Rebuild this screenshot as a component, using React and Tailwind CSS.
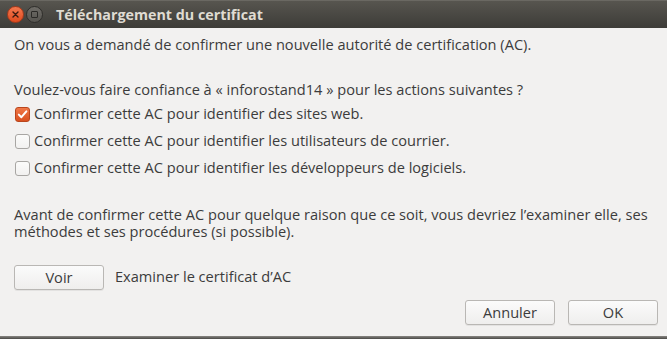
import React from "react";

function Check({ checked }) {
  if (checked) {
    return (
      <span className="flex h-[15px] w-[15px] shrink-0 items-center justify-center rounded-[3px] border border-[#b9461d] bg-gradient-to-b from-[#f07746] to-[#d9501f]">
        <svg width="11" height="11" viewBox="0 0 11 11">
          <path d="M1.8 5.6 L4.4 8.2 L9.4 2.4" fill="none" stroke="#fff" strokeWidth="2" strokeLinecap="round" strokeLinejoin="round" />
        </svg>
      </span>
    );
  }
  return <span className="h-[15px] w-[15px] shrink-0 rounded-[3px] border border-[#a8a6a3] bg-gradient-to-b from-[#fbfbfa] to-[#f2f1f0]" />;
}

function Btn({ children, className = "" }) {
  return (
    <button className={`flex h-[25px] items-center justify-center rounded-[3px] border border-[#b9b7b4] bg-gradient-to-b from-[#fbfbfb] to-[#efeeed] text-[#3c3c3c] shadow-[0_1px_0_rgba(0,0,0,0.06)] ${className}`}>
      {children}
    </button>
  );
}

export default function App() {
  const rows = [
    ["Confirmer cette AC pour identifier des sites web.", true],
    ["Confirmer cette AC pour identifier les utilisateurs de courrier.", false],
    ["Confirmer cette AC pour identifier les développeurs de logiciels.", false],
  ];
  return (
    <div className="flex h-[339px] w-[667px] flex-col bg-[#f2f1f0] font-['Open_Sans',sans-serif] text-[14.6px] text-[#3c3c3c]">
      {/* Title bar */}
      <div className="flex h-[28px] shrink-0 items-center bg-gradient-to-b from-[#57554f] to-[#3d3c38] border-t border-[#6a6862]">
        <span className="ml-[7px] flex h-[17px] w-[17px] items-center justify-center rounded-full border border-[#a8391a] bg-gradient-to-b from-[#f4774d] to-[#df4a1c]">
          <svg width="7" height="7" viewBox="0 0 7 7">
            <path d="M1 1 L6 6 M6 1 L1 6" stroke="#3a1a10" strokeWidth="1.4" strokeLinecap="round" />
          </svg>
        </span>
        <span className="ml-[2px] flex h-[17px] w-[17px] items-center justify-center rounded-full border border-[#2f2e2b] bg-gradient-to-b from-[#6e6c67] to-[#56544f]">
          <span className="h-[7px] w-[7px] rounded-[1px] border border-[#2b2a27]" />
        </span>
        <span className="ml-[13px] text-[14.3px] font-bold text-[#dfdbd2]">Téléchargement du certificat</span>
      </div>

      {/* Content */}
      <div className="flex flex-1 flex-col px-[14px]">
        <p className="mt-[7px] leading-[18px]">On vous a demandé de confirmer une nouvelle autorité de certification (AC).</p>
        <p className="mt-[27px] leading-[18px]">Voulez-vous faire confiance à « inforostand14 » pour les actions suivantes ?</p>
        <div className="mt-[7px] flex flex-col gap-[9px]">
          {rows.map(([t, c]) => (
            <div key={t} className="flex h-[18px] items-center gap-[4px] pl-[1px]">
              <Check checked={c} />
              <span>{t}</span>
            </div>
          ))}
        </div>
        <p className="mt-[29px] leading-[17px]">
          Avant de confirmer cette AC pour quelque raison que ce soit, vous devriez l’examiner elle, ses méthodes et ses procédures (si possible).
        </p>
        <div className="mt-[25px] flex items-center">
          <Btn className="w-[90px]">Voir</Btn>
          <span className="ml-[11px] -mt-[2px]">Examiner le certificat d’AC</span>
        </div>
        <div className="mt-[10px] flex justify-end gap-[13px]">
          <Btn className="w-[90px]">Annuler</Btn>
          <Btn className="w-[90px] -mr-[5px]">OK</Btn>
        </div>
      </div>
      <div className="h-[3px] shrink-0 bg-gradient-to-b from-[#8a8884] to-[#4a4946]" />
    </div>
  );
}
